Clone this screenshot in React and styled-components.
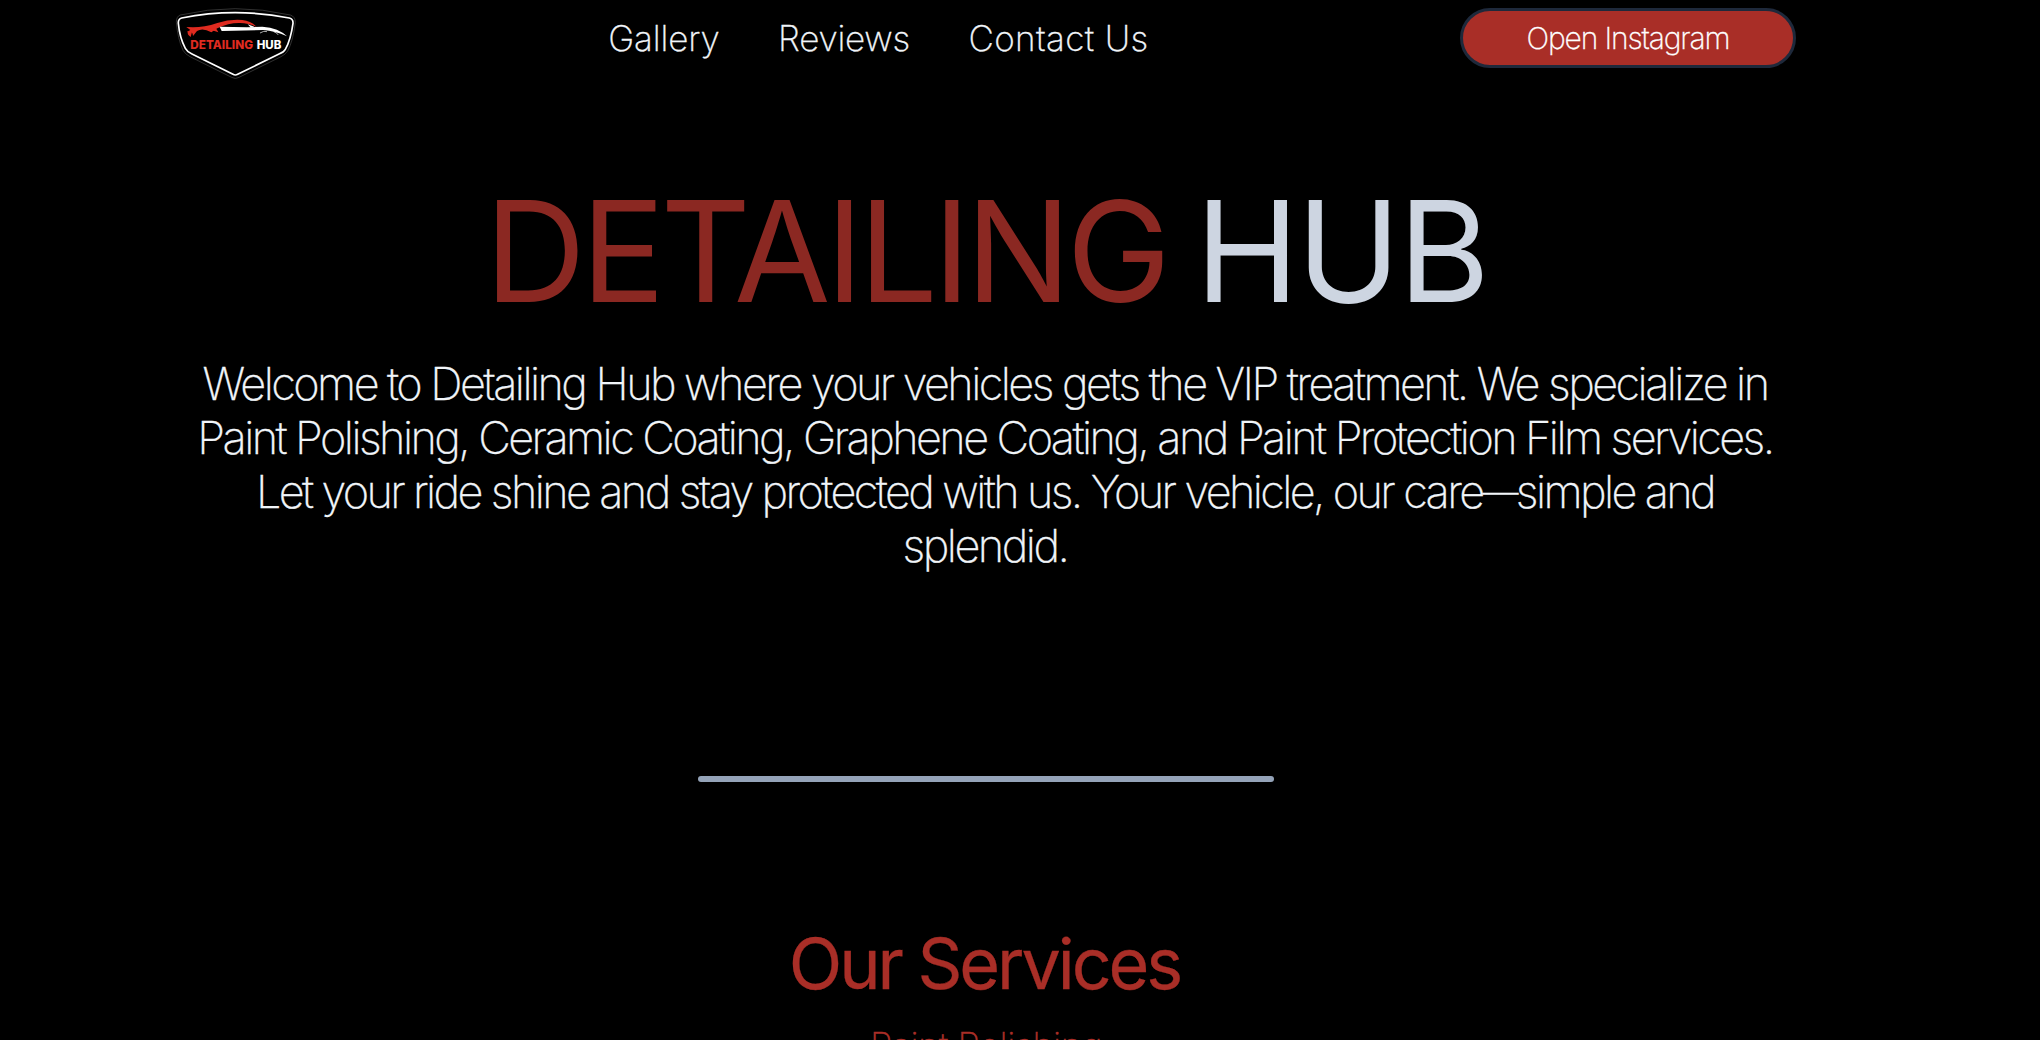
import React from "react";
import styled, { createGlobalStyle } from "styled-components";

const GlobalStyle = createGlobalStyle`
  * { box-sizing: border-box; }
  body {
    margin: 0;
    background: #000;
    color: #f1f5f9;
    font-family: Inter, "Liberation Sans", sans-serif;
    font-weight: 200;
  }
`;

const Page = styled.div`
  width: 1972px;
  height: 1040px;
  overflow: hidden;
  display: flex;
  flex-direction: column;
  align-items: center;
  background: #000;
`;

const Header = styled.header`
  width: 1620px;
  height: 85px;
  flex: none;
  display: flex;
  align-items: flex-start;
  justify-content: space-between;
`;

const Logo = styled.svg`
  display: block;
  width: 140px;
  height: 85px;
  margin-left: -11px;
`;

const Nav = styled.nav`
  display: flex;
  gap: 58.5px;
  padding-top: 16px;
  margin-left: -8px;
`;

const NavLink = styled.a`
  font-size: 35px;
  line-height: 44px;
  letter-spacing: ${(p) => p.$spacing}px;
  color: #f1f5f9;
  -webkit-text-stroke: 0.3px #f1f5f9;
  white-space: nowrap;
`;

const InstagramButton = styled.button`
  width: 336px;
  height: 60px;
  margin-top: 8px;
  padding: 0;
  border: 3px solid #1e293b;
  border-radius: 30px;
  background: #a92e27;
  color: #fff;
  font: 200 30px/50px Inter, sans-serif;
  letter-spacing: -1.12px;
  -webkit-text-stroke: 0.3px #fff;
`;

const Title = styled.h1`
  display: flex;
  gap: 29px;
  margin: 81px 0 0;
  font-size: 140px;
  font-weight: 400;
  line-height: 170px;
  white-space: nowrap;
`;

const TitleWord = styled.span`
  color: ${(p) => p.$color};
  letter-spacing: ${(p) => p.$spacing}px;
`;

const Intro = styled.p`
  width: 1640px;
  margin: 21px 0 0;
  padding-right: 2px;
  font-size: 45px;
  line-height: 54px;
  text-align: center;
  color: #f1f5f9;
  -webkit-text-stroke: 0.3px #f1f5f9;
  white-space: nowrap;
`;

const IntroLine = styled.span`
  display: block;
  letter-spacing: ${(p) => p.$spacing}px;
`;

const Dash = styled.span`
  font-size: 36px;
  font-weight: 200;
  line-height: 0;
  vertical-align: 3px;
`;

const Divider = styled.hr`
  width: 576px;
  height: 6px;
  flex: none;
  margin: 203px 0 0;
  border: 0;
  border-radius: 3px;
  background: #94a3b8;
`;

const SectionTitle = styled.h2`
  margin: 139px 0 0;
  padding-right: 3px;
  font-size: 70px;
  font-weight: 400;
  line-height: 85px;
  letter-spacing: -3.06px;
  color: #a92e27;
  -webkit-text-stroke: 0.3px #a92e27;
`;

const ServiceName = styled.h3`
  margin: 18px 0 0;
  font-size: 36px;
  font-weight: 200;
  line-height: 44px;
  letter-spacing: -0.5px;
  color: #a92e27;
  -webkit-text-stroke: 0.3px #a92e27;
`;

const links = [
  { label: "Gallery", spacing: -0.16 },
  { label: "Reviews", spacing: -0.27 },
  { label: "Contact Us", spacing: 0.38 },
];

const introLines = [
  {
    text: "Welcome to Detailing Hub where your vehicles gets the VIP treatment. We specialize in",
    spacing: -2.557,
  },
  {
    text: "Paint Polishing, Ceramic Coating, Graphene Coating, and Paint Protection Film services.",
    spacing: -2.577,
  },
  {
    text: (
      <>
        Let your ride shine and stay protected with us. Your vehicle, our care
        <Dash>—</Dash>simple and
      </>
    ),
    spacing: -2.62,
  },
  { text: "splendid.", spacing: -2.5 },
];

function BrandLogo() {
  return (
    <Logo viewBox="0 0 420 255" role="img" aria-label="Detailing Hub">
      <path
        d="M46 45Q210 7 376 45Q390 49 391 67Q384 124 368 153Q362 163 348 170L222 232Q211 239 200 232L75 170Q61 163 54 151Q38 116 34 67Q34 49 46 45Z"
        fill="none" stroke="#4a4a4a" strokeWidth="2"
      />
      <path
        d="M50 54Q210 22 373 54Q385 57 384 70Q377 120 361 148Q356 157 342 162L218 223Q211 227 204 223L81 162Q67 156 61 145Q44 113 40 70Q39 57 50 54Z"
        fill="none" stroke="#fff" strokeWidth="5"
      />
      <path
        d="M64 81L84 82Q118 82 157 69Q194 57 232 60Q258 62 275 81Q251 69 225 69Q192 68 157 85L139 97Q113 82 96 93L84 108Q83 91 65 96L76 90Z"
        fill="#e02b20"
      />
      <path d="M68 94L82 92L77 111Q66 105 68 94Z" fill="#e02b20" />
      <path d="M117 90Q143 80 155 88L160 97Q137 86 117 90Z" fill="#e02b20" />
      <path d="M164 80L245 82L292 80Q342 84 366 109Q329 92 295 90L170 93Z" fill="#fff" />
      <path d="M248 73L268 80L258 83Z" fill="#fff" />
      <path d="M285 99Q297 91 306 95M326 95Q336 98 340 105" fill="none" stroke="#fff" strokeWidth="2" />
      <text
        x="76" y="147" fontFamily="Inter, sans-serif" fontSize="35" fontWeight="800"
        textLength="188" lengthAdjust="spacingAndGlyphs" fill="#e02b20"
      >
        DETAILING
      </text>
      <text
        x="275" y="147" fontFamily="Inter, sans-serif" fontSize="35" fontWeight="800"
        textLength="74" lengthAdjust="spacingAndGlyphs" fill="#fff"
      >
        HUB
      </text>
    </Logo>
  );
}

export default function App() {
  return (
    <Page>
      <GlobalStyle />
      <Header>
        <BrandLogo />
        <Nav>
          {links.map((l) => (
            <NavLink key={l.label} $spacing={l.spacing}>{l.label}</NavLink>
          ))}
        </Nav>
        <InstagramButton>Open Instagram</InstagramButton>
      </Header>
      <Title>
        <TitleWord $color="#8b2822" $spacing={-4.8}>DETAILING</TitleWord>
        <TitleWord $color="#cdd5e1" $spacing={-2.6}>HUB</TitleWord>
      </Title>
      <Intro>
        {introLines.map((line, i) => (
          <IntroLine key={i} $spacing={line.spacing}>{line.text}</IntroLine>
        ))}
      </Intro>
      <Divider />
      <SectionTitle>Our Services</SectionTitle>
      <ServiceName>Paint Polishing</ServiceName>
    </Page>
  );
}
